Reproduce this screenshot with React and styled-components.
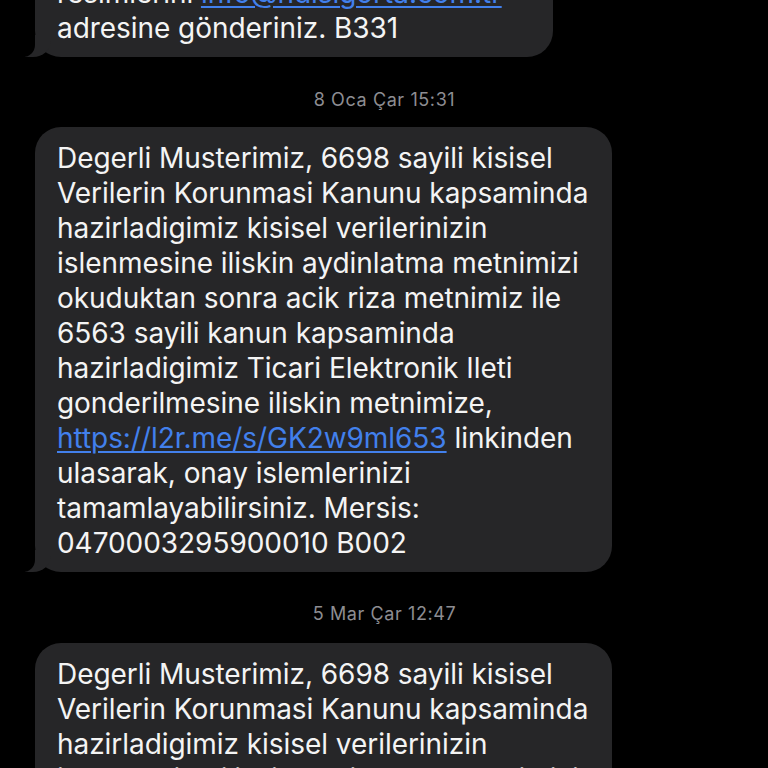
import React from "react";
import styled, { createGlobalStyle } from "styled-components";

const GlobalStyle = createGlobalStyle`
  html, body {
    margin: 0;
    padding: 0;
    background: #000;
  }
  body {
    font-family: Inter, "Noto Sans", "Liberation Sans", sans-serif;
    -webkit-font-smoothing: antialiased;
  }
`;

const Screen = styled.div`
  width: 768px;
  height: 768px;
  overflow: hidden;
  background: #000;
`;

const Thread = styled.div`
  display: flex;
  flex-direction: column;
  align-items: flex-start;
  padding-left: 35px;
  margin-top: ${(p) => p.offset}px;
`;

const Bubble = styled.div`
  position: relative;
  box-sizing: border-box;
  width: ${(p) => p.width}px;
  padding: 14px 20px 11px 22px;
  background: #262628;
  border-radius: 26px;
  color: #f4f4f4;
  font-size: 28px;
  line-height: 35px;
  letter-spacing: -0.05px;
  white-space: nowrap;

  &::before {
    content: "";
    position: absolute;
    left: -10px;
    bottom: 0;
    width: 26px;
    height: 22px;
    background: #262628;
    border-bottom-right-radius: 18px 16px;
  }

  &::after {
    content: "";
    position: absolute;
    left: -14px;
    bottom: 0;
    width: 14px;
    height: 24px;
    background: #000;
    border-bottom-right-radius: 12px;
  }
`;

const Link = styled.span`
  color: #4280ec;
  text-decoration: underline;
  text-decoration-thickness: 2px;
  text-underline-offset: 3px;
`;

const Stamp = styled.div`
  align-self: center;
  margin: ${(p) => p.gap};
  transform: translateX(-17px);
  color: #8d8d92;
  font-size: 18px;
  line-height: 20px;
  letter-spacing: 0.6px;
`;

const consentLines = [
  "Degerli Musterimiz, 6698 sayili kisisel",
  "Verilerin Korunmasi Kanunu kapsaminda",
  "hazirladigimiz kisisel verilerinizin",
  "islenmesine iliskin aydinlatma metnimizi",
  "okuduktan sonra acik riza metnimiz ile",
  "6563 sayili kanun kapsaminda",
  "hazirladigimiz Ticari Elektronik Ileti",
  "gonderilmesine iliskin metnimize,",
];

function ConsentMessage() {
  return (
    <Bubble width={577}>
      {consentLines.map((line) => (
        <div key={line}>{line}</div>
      ))}
      <div>
        <Link>https://l2r.me/s/GK2w9ml653</Link> linkinden
      </div>
      <div>ulasarak, onay islemlerinizi</div>
      <div>tamamlayabilirsiniz. Mersis:</div>
      <div>0470003295900010 B002</div>
    </Bubble>
  );
}

export default function App() {
  return (
    <>
      <GlobalStyle />
      <Screen>
        <Thread offset={-38}>
          <Bubble width={518}>
            <div>
              resimlerini <Link>info@hdisigorta.com.tr</Link>
            </div>
            <div>adresine gönderiniz. B331</div>
          </Bubble>
          <Stamp gap="33px 0 17px">8 Oca Çar 15:31</Stamp>
          <ConsentMessage />
          <Stamp gap="32px 0 19px">5 Mar Çar 12:47</Stamp>
          <ConsentMessage />
        </Thread>
      </Screen>
    </>
  );
}
